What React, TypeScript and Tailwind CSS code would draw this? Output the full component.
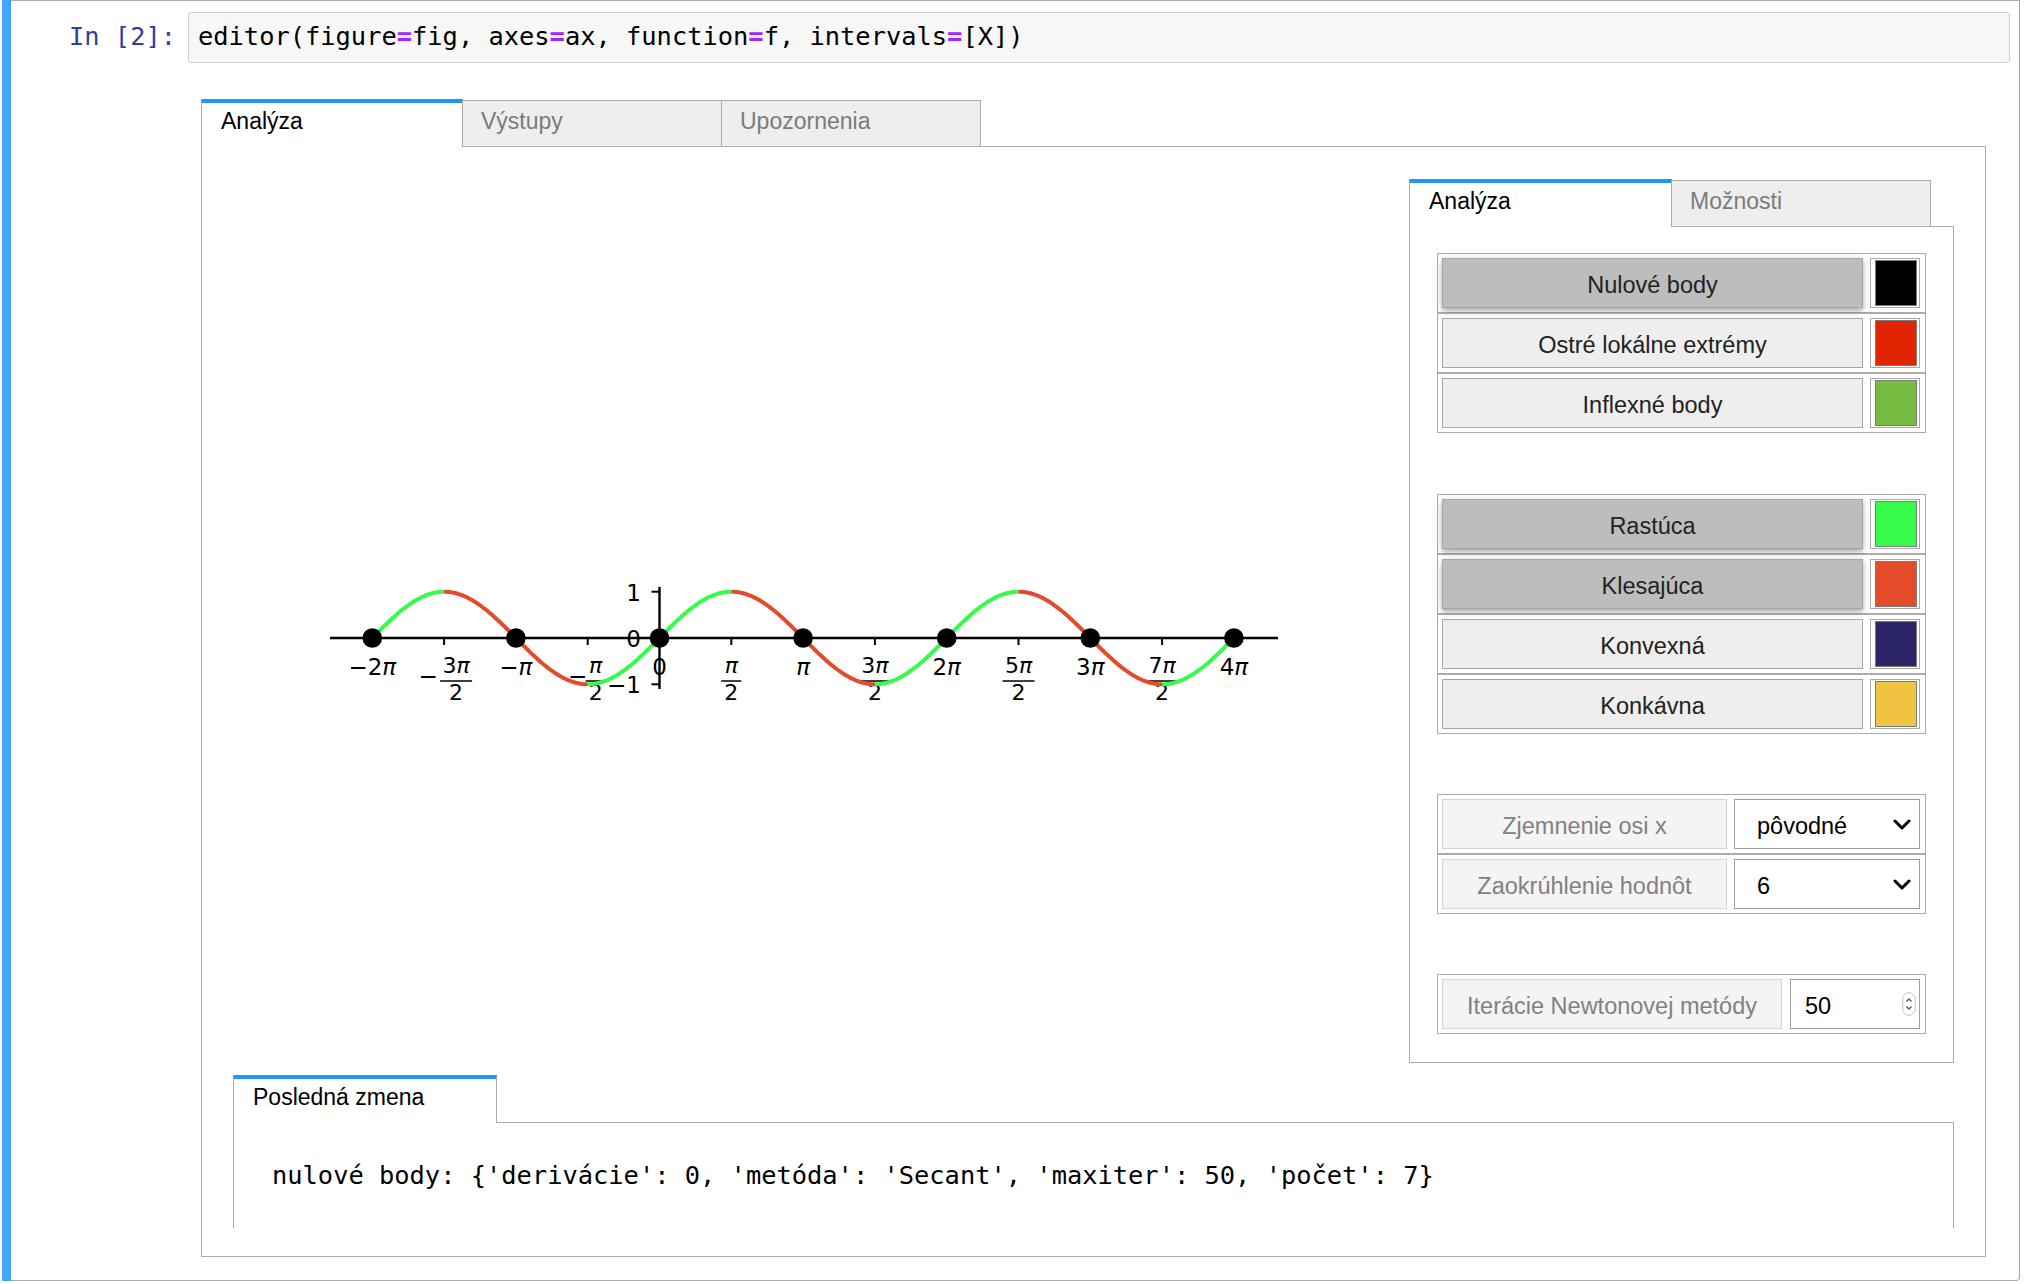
import React from 'react'

const PI = Math.PI
const X0 = 659.5
const U = 143.6 / PI
const Y0 = 638
const A = 46.3
const px = (t: number) => X0 + t * U
const py = (t: number) => Y0 - A * Math.sin(t)

const GREEN = '#35fc4a'
const RED = '#e34b2b'

const code = 'editor(figure=fig, axes=ax, function=f, intervals=[X])'

function CodeLine() {
  const parts = code.split('=')
  return (
    <>
      {parts.map((p, i) => (
        <span key={i}>
          {p}
          {i < parts.length - 1 && <span className="text-[#aa22ff] font-bold">=</span>}
        </span>
      ))}
    </>
  )
}

function TabBar({ tabs, active, wide }: { tabs: string[]; active: number; wide: string }) {
  return (
    <div className="flex items-end">
      {tabs.map((t, i) =>
        i === active ? (
          <div
            key={t}
            className={`${wide} h-[48px] shrink-0 border-t-4 border-t-[#2196f3] border-x border-x-[#ababab] bg-white pt-[5px] pl-[19px] text-[23px] leading-[26px] text-black`}
          >
            {t}
          </div>
        ) : (
          <div
            key={t}
            className="-ml-px w-[260px] h-[47px] shrink-0 border border-[#ababab] bg-[#eeeeee] pt-[7px] pl-[18px] text-[23px] leading-[26px] text-[#7b7b7b]"
          >
            {t}
          </div>
        )
      )}
      <div className="flex-1 border-b border-[#ababab]" />
    </div>
  )
}

type Toggle = { label: string; on: boolean; sw: string }

const group1: Toggle[] = [
  { label: 'Nulové body', on: true, sw: 'bg-[#000000]' },
  { label: 'Ostré lokálne extrémy', on: false, sw: 'bg-[#e32400]' },
  { label: 'Inflexné body', on: false, sw: 'bg-[#77bb41]' },
]

const group2: Toggle[] = [
  { label: 'Rastúca', on: true, sw: 'bg-[#35fd4a]' },
  { label: 'Klesajúca', on: true, sw: 'bg-[#e34b2b]' },
  { label: 'Konvexná', on: false, sw: 'bg-[#2b2465]' },
  { label: 'Konkávna', on: false, sw: 'bg-[#f0c342]' },
]

function ToggleRow({ item }: { item: Toggle }) {
  return (
    <div className="flex h-[60px] gap-[7px] border border-[#ababab] py-[4px] pl-[4px] pr-[5px]">
      <div
        className={
          item.on
            ? 'flex flex-1 items-center justify-center border border-[#a6a6a6] bg-[#bdbdbd] pt-[5px] text-[23.5px] text-[#222] shadow-[0_2px_4px_-1px_rgba(0,0,0,0.2),0_4px_5px_0_rgba(0,0,0,0.14),0_1px_10px_0_rgba(0,0,0,0.12)]'
            : 'flex flex-1 items-center justify-center border border-[#a6a6a6] bg-[#eeeeee] pt-[5px] text-[23.5px] text-[#222]'
        }
      >
        {item.label}
      </div>
      <div className="w-[50px] border border-[#ababab] bg-white py-[1px] pl-[4px] pr-[2px]">
        <div className={`h-full border border-[#7a7a7a] ${item.sw}`} />
      </div>
    </div>
  )
}

function Chevron() {
  return (
    <svg width="18" height="11" viewBox="0 0 18 11">
      <polyline points="2,2 9,9 16,2" fill="none" stroke="#000" strokeWidth="3" strokeLinecap="round" strokeLinejoin="round" />
    </svg>
  )
}

function SelectRow({ label, value }: { label: string; value: string }) {
  return (
    <div className="flex h-[60px] gap-[7px] border border-[#ababab] py-[4px] pl-[4px] pr-[5px]">
      <div className="flex w-[285px] items-center justify-center border border-[#d4d4d4] bg-[#f4f4f4] pt-[5px] text-[23.5px] text-[#818181]">
        {label}
      </div>
      <div className="flex flex-1 items-center justify-between border border-[#9e9e9e] bg-white pl-[22px] pr-[8px] text-[23.5px] text-black">
        <span className="pt-[5px]">{value}</span>
        <Chevron />
      </div>
    </div>
  )
}

function Spinner() {
  return (
    <svg width="14" height="24" viewBox="0 0 14 24">
      <rect x="0.75" y="0.75" width="12.5" height="22.5" rx="6.25" fill="#fff" stroke="#c2c2c2" strokeWidth="1" />
      <polyline points="4.5,9.5 7,7 9.5,9.5" fill="none" stroke="#555" strokeWidth="1.3" />
      <polyline points="4.5,14.5 7,17 9.5,14.5" fill="none" stroke="#555" strokeWidth="1.3" />
    </svg>
  )
}

function Plot() {
  const bounds = [-2, -1.5, -0.5, 0.5, 1.5, 2.5, 3.5, 4].map((k) => k * PI)
  const segs = bounds.slice(0, -1).map((a, i) => {
    const b = bounds[i + 1]
    const n = 60
    const pts = Array.from({ length: n + 1 }, (_, j) => {
      const t = a + ((b - a) * j) / n
      return `${px(t).toFixed(2)},${py(t).toFixed(2)}`
    }).join(' ')
    return { pts, color: i % 2 === 0 ? GREEN : RED }
  })
  const whole = [
    { k: -2, s: '−2' },
    { k: -1, s: '−' },
    { k: 0, s: '0' },
    { k: 1, s: '' },
    { k: 2, s: '2' },
    { k: 3, s: '3' },
    { k: 4, s: '4' },
  ]
  const fracs = [
    { k: -1.5, n: '3', neg: true },
    { k: -0.5, n: '', neg: true },
    { k: 0.5, n: '', neg: false },
    { k: 1.5, n: '3', neg: false },
    { k: 2.5, n: '5', neg: false },
    { k: 3.5, n: '7', neg: false },
  ]
  const ticks = [-2, -1.5, -1, -0.5, 0, 0.5, 1, 1.5, 2, 2.5, 3, 3.5, 4]
  return (
    <svg width="1176" height="884" viewBox="233 179 1176 884" fontFamily="DejaVu Sans" fill="#000">
      <line x1="330" y1={Y0} x2="1278" y2={Y0} stroke="#000" strokeWidth="2.4" />
      <line x1={X0} y1="587" x2={X0} y2="689" stroke="#000" strokeWidth="2.4" />
      {ticks.map((k) => (
        <line key={k} x1={px(k * PI)} y1={Y0} x2={px(k * PI)} y2={Y0 + 7} stroke="#000" strokeWidth="2" />
      ))}
      {[1, 0, -1].map((v) => (
        <line key={v} x1={X0 - 8} y1={Y0 - A * v} x2={X0} y2={Y0 - A * v} stroke="#000" strokeWidth="2" />
      ))}
      <g fontSize="23" textAnchor="end">
        <text x="641" y="601">1</text>
        <text x="641" y="647">0</text>
        <text x="641" y="693">−1</text>
      </g>
      <g fontSize="23" textAnchor="middle">
        {whole.map((w) => (
          <text key={w.k} x={px(w.k * PI)} y="675">
            {w.k === 0 ? '0' : (
              <>
                {w.s}
                <tspan fontStyle="italic">π</tspan>
              </>
            )}
          </text>
        ))}
      </g>
      <g fontSize="22" textAnchor="middle">
        {fracs.map((f) => {
          const tx = px(f.k * PI)
          const bw = f.n ? 32 : 20
          const cx = f.neg ? tx + (f.n ? 12 : 8) : tx
          return (
            <g key={f.k}>
              {f.neg && (
                <text x={cx - bw / 2 - (f.n ? 12 : 8)} y="683.5" fontSize="23">
                  −
                </text>
              )}
              <text x={cx} y="673">
                {f.n}
                <tspan fontStyle="italic">π</tspan>
              </text>
              <line x1={cx - bw / 2} y1="681" x2={cx + bw / 2} y2="681" stroke="#000" strokeWidth="1.5" />
              <text x={cx} y="700">
                2
              </text>
            </g>
          )
        })}
      </g>
      {segs.map((s, i) => (
        <polyline key={i} points={s.pts} fill="none" stroke={s.color} strokeWidth="4" strokeLinecap="butt" />
      ))}
      {[-2, -1, 0, 1, 2, 3, 4].map((k) => (
        <circle key={k} cx={px(k * PI)} cy={Y0} r="9.8" fill="#000" />
      ))}
    </svg>
  )
}

export default function App() {
  return (
    <div className="h-[1284px] w-[2026px] bg-white font-['Liberation_Sans',Arial,sans-serif]">
      <div className="flex h-[1281px] w-[2020px] pl-[2px]">
        <div className="w-[9px] bg-[#42a5f5]" />
        <div className="flex flex-1 flex-col rounded-br-[4px] border-y border-r border-[#ababab]">
          {/* input */}
          <div className="flex items-start pt-[11px] font-['DejaVu_Sans_Mono',monospace] text-[25.4px]">
            <div className="w-[177px] shrink-0 pr-[12px] pt-[9px] text-right leading-[30px] text-[#303f9f]">In [2]:</div>
            <div className="mr-[9px] h-[51px] flex-1 rounded-[3px] border border-[#cfcfcf] bg-[#f7f7f7] pl-[9px] pt-[8px] leading-[30px] text-black">
              <CodeLine />
            </div>
          </div>

          {/* output */}
          <div className="pl-[190px] pt-[36px]">
            <div className="w-[1785px]">
              <TabBar tabs={['Analýza', 'Výstupy', 'Upozornenia']} active={0} wide="w-[262px]" />
              <div className="border-x border-b border-[#ababab] px-[31px] pb-[28px] pt-[32px]">
                <div className="flex">
                  <div className="flex-1">
                    <Plot />
                  </div>
                  <div className="w-[545px] shrink-0">
                    <TabBar tabs={['Analýza', 'Možnosti']} active={0} wide="w-[263px]" />
                    <div className="flex flex-col gap-[60px] border-x border-b border-[#ababab] px-[27px] pb-[28px] pt-[26px]">
                      <div className="flex flex-col">
                        {group1.map((g) => (
                          <ToggleRow key={g.label} item={g} />
                        ))}
                      </div>
                      <div className="mt-px flex flex-col">
                        {group2.map((g) => (
                          <ToggleRow key={g.label} item={g} />
                        ))}
                      </div>
                      <div className="flex flex-col">
                        <SelectRow label="Zjemnenie osi x" value="pôvodné" />
                        <SelectRow label="Zaokrúhlenie hodnôt" value="6" />
                      </div>
                      <div className="flex h-[60px] gap-[8px] border border-[#ababab] py-[4px] pl-[4px] pr-[5px]">
                        <div className="flex w-[340px] items-center justify-center border border-[#d4d4d4] bg-[#f4f4f4] pt-[5px] text-[23.5px] text-[#818181]">
                          Iterácie Newtonovej metódy
                        </div>
                        <div className="flex flex-1 items-center justify-between border border-[#9e9e9e] bg-white pl-[14px] pr-[3px] text-[23.5px] text-black">
                          <span className="pt-[5px]">50</span>
                          <Spinner />
                        </div>
                      </div>
                    </div>
                  </div>
                </div>

                <div className="mt-[12px]">
                  <TabBar tabs={['Posledná zmena']} active={0} wide="w-[264px]" />
                  <div className="h-[105px] border-x border-[#ababab] pl-[38px] pt-[37px] font-['DejaVu_Sans_Mono',monospace] text-[25.4px] leading-[30px] text-black">
                    nulové body: {'{'}'derivácie': 0, 'metóda': 'Secant', 'maxiter': 50, 'počet': 7{'}'}
                  </div>
                </div>
              </div>
            </div>
          </div>
        </div>
      </div>
    </div>
  )
}
